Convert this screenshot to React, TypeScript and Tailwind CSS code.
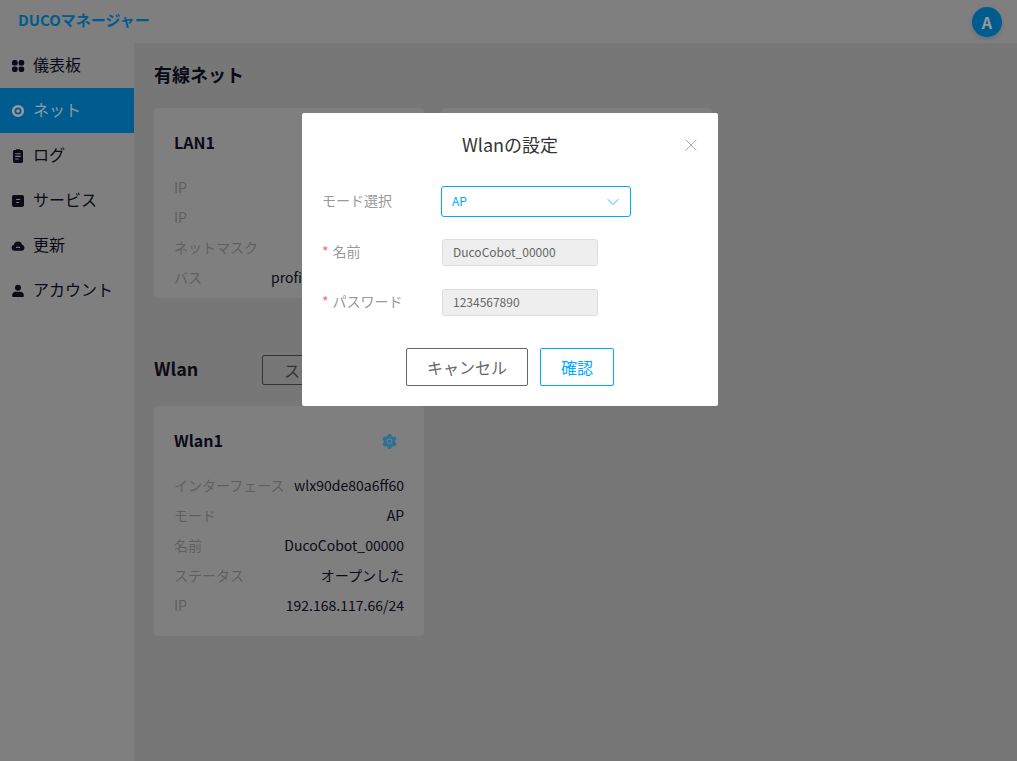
import React from 'react'
import { ChevronDown, X } from 'lucide-react'
import { AiFillSetting } from 'react-icons/ai'

const NAV_ICON = 'h-[14px] w-[14px] fill-[#0a0b16] shrink-0'

const NAV_ITEMS: { label: string; active?: boolean; icon: React.ReactNode }[] = [
  {
    label: '儀表板',
    icon: (
      <svg viewBox="0 0 14 14" className={NAV_ICON}>
        <rect x="1" y="1" width="5.6" height="5.6" rx="2.2" />
        <rect x="7.6" y="1" width="5.6" height="5.6" rx="2.2" />
        <rect x="1" y="7.4" width="5.6" height="5.6" rx="2.2" />
        <rect x="7.6" y="7.4" width="5.6" height="5.6" rx="2.2" />
      </svg>
    ),
  },
  {
    label: 'ネット',
    active: true,
    icon: (
      <svg viewBox="0 0 14 14" className="h-[14px] w-[14px] shrink-0">
        <circle cx="7" cy="7" r="4.8" fill="none" stroke="#9a9a9a" strokeWidth="2.6" />
        <circle cx="7" cy="7" r="1.7" fill="#9a9a9a" />
      </svg>
    ),
  },
  {
    label: 'ログ',
    icon: (
      <svg viewBox="0 0 14 14" className={NAV_ICON}>
        <path d="M3.4 1H5V.2h4V1h1.6A1.7 1.7 0 0 1 12 2.7v9.6a1.7 1.7 0 0 1-1.4 1.7H3.4A1.7 1.7 0 0 1 2 12.3V2.7A1.7 1.7 0 0 1 3.4 1z" />
        <path d="M4.2 4.2h5.6v1.1H4.2zM4.2 6.8h5.6v1.1H4.2zM4.2 9.4h3.6v1.1H4.2z" fill="#7f7f7f" />
      </svg>
    ),
  },
  {
    label: 'サービス',
    icon: (
      <svg viewBox="0 0 14 14" className={NAV_ICON}>
        <rect x="1" y="1" width="12" height="12" rx="2" />
        <path d="M5.2 5h4v1.1h-4zM5.2 7.9h3v1.1h-3z" fill="#7f7f7f" />
      </svg>
    ),
  },
  {
    label: '更新',
    icon: (
      <svg viewBox="0 0 14 14" className={NAV_ICON}>
        <path d="M7 2.4a4.1 4.1 0 0 1 4 3.3 3.1 3.1 0 0 1-.1 6.1H3.1A3.1 3.1 0 0 1 3 5.7a4.1 4.1 0 0 1 4-3.3z" />
        <path d="M5 7.8h4v1.1H5z" fill="#7f7f7f" />
      </svg>
    ),
  },
  {
    label: 'アカウント',
    icon: (
      <svg viewBox="0 0 14 14" className={NAV_ICON}>
        <circle cx="7" cy="3.8" r="3" />
        <path d="M1.2 11.4A3.6 3.6 0 0 1 4.8 7.8h4.4a3.6 3.6 0 0 1 3.6 3.6v.5a1.2 1.2 0 0 1-1.2 1.2H2.4a1.2 1.2 0 0 1-1.2-1.2z" />
      </svg>
    ),
  },
]

const InfoRow = ({ label, value }: { label: string; value?: string }) => (
  <div className="flex h-[30px] items-center justify-between whitespace-nowrap text-sm">
    <span className="text-[#5f5f5f]">{label}</span>
    <span className="text-[#0a0b16]">{value}</span>
  </div>
)

const Card = ({ title, gear, children }: { title?: string; gear?: boolean; children?: React.ReactNode }) => (
  <div className="min-h-[190px] w-[270px] rounded bg-[#7f7f7f] px-5 pt-5">
    <div className="mb-[14px] flex h-[30px] items-center justify-between pb-[2px]">
      <span className="text-base font-bold text-[#0a0b16]">{title}</span>
      {gear && <AiFillSetting className="mr-[6px] mt-[2px] text-[#2b7096]" size={17} />}
    </div>
    {children}
  </div>
)

const FormRow = ({ label, required, children }: { label: string; required?: boolean; children: React.ReactNode }) => (
  <div className="flex items-center pl-5">
    <div className="w-[120px] pb-1 text-sm text-[#999]">
      {required && <span className="mr-1 text-[#f56c6c]">*</span>}
      {label}
    </div>
    {children}
  </div>
)

const ReadonlyInput = ({ value }: { value: string }) => (
  <div className="flex h-[27px] w-[156px] items-center rounded-[3px] border border-[#ddd] bg-[#eee] px-[10px] pb-[2px] text-xs text-[#666]">
    {value}
  </div>
)

export default function App() {
  return (
    <div className="relative flex h-[761px] w-[1017px] flex-col overflow-hidden bg-[#777] font-['Noto_Sans_CJK_JP','Noto_Sans',sans-serif]">
      <header className="flex h-[43px] shrink-0 items-center justify-between bg-[#7f7f7f] pl-[18px] pr-[15px]">
        <span className="pb-[3px] text-[15px] font-bold text-[#005c8e]">DUCOマネージャー</span>
        <div className="flex h-[30px] w-[30px] items-center justify-center rounded-full bg-[#005c8e] text-base font-bold text-[#9a9a9a] shadow-[0_2px_4px_rgba(0,80,130,0.3)]">
          A
        </div>
      </header>
      <div className="flex flex-1">
        <aside className="w-[134px] shrink-0 bg-[#7f7f7f]">
          {NAV_ITEMS.map((item) => (
            <div
              key={item.label}
              className={
                item.active
                  ? 'flex h-[45px] items-center gap-2 bg-[#005c8e] pl-[11px] text-base text-[#8d9aa3]'
                  : 'flex h-[45px] items-center gap-2 pl-[11px] text-base text-[#0a0b16]'
              }
            >
              {item.icon}
              <span className="pb-[3px]">{item.label}</span>
            </div>
          ))}
        </aside>
        <main className="flex-1 pl-5">
          <h2 className="flex h-[65px] items-center pb-[3px] text-lg font-bold text-[#0a0b16]">有線ネット</h2>
          <div className="flex gap-[18px]">
            <Card title="LAN1">
              <InfoRow label="IP" />
              <InfoRow label="IP" />
              <InfoRow label="ネットマスク" />
              <InfoRow label="バス" value="profinet_interface_1" />
            </Card>
            <Card />
          </div>
          <div className="mt-[45px] flex h-[50px] items-center">
            <h2 className="w-[108px] text-lg font-bold text-[#0a0b16]">Wlan</h2>
            <div className="mt-1 flex h-[30px] items-center rounded-[2px] border border-[#333] px-[21px] text-base text-[#333]">
              スイッチ
            </div>
          </div>
          <div className="mt-[13px]">
            <Card title="Wlan1" gear>
              <InfoRow label="インターフェース" value="wlx90de80a6ff60" />
              <InfoRow label="モード" value="AP" />
              <InfoRow label="名前" value="DucoCobot_00000" />
              <InfoRow label="ステータス" value="オープンした" />
              <InfoRow label="IP" value="192.168.117.66/24" />
              <div className="h-4" />
            </Card>
          </div>
        </main>
      </div>

      <div className="absolute left-[302px] top-[113px] h-[293px] w-[416px] rounded-[2px] bg-white">
        <div className="relative flex h-[64px] items-center justify-center pb-[2px] text-lg text-[#333]">
          Wlanの設定
          <X className="absolute right-[17px] top-[22px] text-[#999]" size={20} strokeWidth={1} />
        </div>
        <div className="mt-[9px]">
          <FormRow label="モード選択">
            <div className="-ml-px flex h-[31px] w-[190px] items-center justify-between rounded-[3px] border border-[#00aaff] pb-[2px] pl-[10px] pr-[7px] text-xs text-[#00aaff]">
              AP
              <ChevronDown className="mt-[2px]" size={20} strokeWidth={1} />
            </div>
          </FormRow>
          <div className="mt-[22px]">
            <FormRow label="名前" required>
              <ReadonlyInput value="DucoCobot_00000" />
            </FormRow>
          </div>
          <div className="mt-[23px]">
            <FormRow label="パスワード" required>
              <ReadonlyInput value="1234567890" />
            </FormRow>
          </div>
        </div>
        <div className="mt-[32px] flex justify-center gap-3">
          <button className="h-[38px] w-[122px] rounded-[2px] border border-[#666] text-base text-[#666]">キャンセル</button>
          <button className="h-[38px] w-[74px] rounded-[2px] border border-[#00aaff] text-base text-[#00aaff]">確認</button>
        </div>
      </div>
    </div>
  )
}
